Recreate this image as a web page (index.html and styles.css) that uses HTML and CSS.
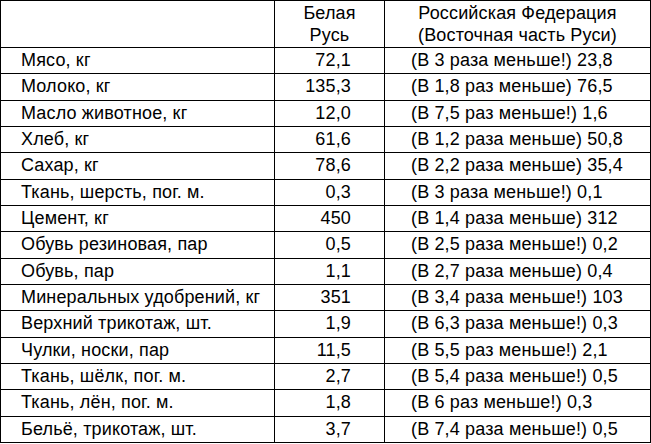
FILE: index.html
```html
<!DOCTYPE html>
<html lang="ru">
<head>
<meta charset="utf-8">
<title>Сравнение</title>
<link rel="stylesheet" href="styles.css">
</head>
<body>
<table class="compare">
  <thead>
    <tr class="head">
      <th class="c1"></th>
      <th class="c2">Белая<br>Русь</th>
      <th class="c3">Российская Федерация<br>(Восточная часть Руси)</th>
    </tr>
  </thead>
  <tbody>
    <tr><td class="c1">Мясо, кг</td><td class="c2">72,1</td><td class="c3">(В 3 раза меньше!) 23,8</td></tr>
    <tr><td class="c1">Молоко, кг</td><td class="c2">135,3</td><td class="c3">(В 1,8 раз меньше) 76,5</td></tr>
    <tr><td class="c1">Масло животное, кг</td><td class="c2">12,0</td><td class="c3">(В 7,5 раз меньше!) 1,6</td></tr>
    <tr><td class="c1">Хлеб, кг</td><td class="c2">61,6</td><td class="c3">(В 1,2 раза меньше) 50,8</td></tr>
    <tr><td class="c1">Сахар, кг</td><td class="c2">78,6</td><td class="c3">(В 2,2 раза меньше) 35,4</td></tr>
    <tr><td class="c1">Ткань, шерсть, пог. м.</td><td class="c2">0,3</td><td class="c3">(В 3 раза меньше!) 0,1</td></tr>
    <tr><td class="c1">Цемент, кг</td><td class="c2">450</td><td class="c3">(В 1,4 раза меньше) 312</td></tr>
    <tr><td class="c1">Обувь резиновая, пар</td><td class="c2">0,5</td><td class="c3">(В 2,5 раза меньше!) 0,2</td></tr>
    <tr><td class="c1">Обувь, пар</td><td class="c2">1,1</td><td class="c3">(В 2,7 раза меньше) 0,4</td></tr>
    <tr><td class="c1">Минеральных удобрений, кг</td><td class="c2">351</td><td class="c3">(В 3,4 раза меньше!) 103</td></tr>
    <tr><td class="c1">Верхний трикотаж, шт.</td><td class="c2">1,9</td><td class="c3">(В 6,3 раза меньше!) 0,3</td></tr>
    <tr><td class="c1">Чулки, носки, пар</td><td class="c2">11,5</td><td class="c3">(В 5,5 раз меньше!) 2,1</td></tr>
    <tr><td class="c1">Ткань, шёлк, пог. м.</td><td class="c2">2,7</td><td class="c3">(В 5,4 раза меньше!) 0,5</td></tr>
    <tr><td class="c1">Ткань, лён, пог. м.</td><td class="c2">1,8</td><td class="c3">(В 6 раз меньше!) 0,3</td></tr>
    <tr><td class="c1">Бельё, трикотаж, шт.</td><td class="c2">3,7</td><td class="c3">(В 7,4 раза меньше!) 0,5</td></tr>
  </tbody>
</table>
</body>
</html>
```
FILE: styles.css
```css
html, body {
  margin: 0;
  padding: 0;
  background: #fff;
}
.compare {
  border-collapse: separate;
  border-spacing: 0;
  table-layout: fixed;
  width: 651px;
  border-top: 1px solid #000;
  border-left: 1px solid #000;
  font-family: "Liberation Sans", Arial, sans-serif;
  font-size: 18px;
  letter-spacing: 0.15px;
  color: #000;
}
.compare th,
.compare td {
  border-right: 1px solid #000;
  border-bottom: 1px solid #000;
  padding: 0;
  vertical-align: middle;
  white-space: nowrap;
  box-sizing: border-box;
}
.compare th {
  font-weight: normal;
  line-height: 22px;
  text-align: center;
}
.compare .head {
  height: 47px;
}
.compare tbody tr {
  height: 26.33px;
}
.compare th.c1 { width: 274px; }
.compare th.c2 { width: 110px; }
.compare th.c3 { width: 266px; }
.compare td.c1 {
  text-align: left;
  padding-left: 20px;
}
.compare td.c2 {
  text-align: right;
  padding-right: 33px;
}
.compare td.c3 {
  text-align: left;
  padding-left: 26px;
}
```
